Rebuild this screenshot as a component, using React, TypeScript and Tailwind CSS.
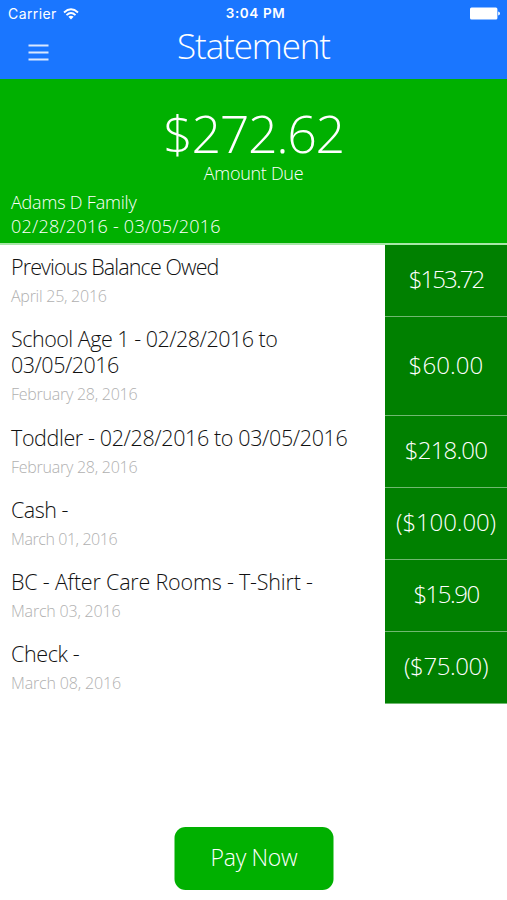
type Item = { title: string[]; date: string; amount: string; track: string; dateTrack: string; amountTrack: string };

const items: Item[] = [
  { title: ["Previous Balance Owed"], date: "April 25, 2016", amount: "$153.72", track: "tracking-[-0.9px]", dateTrack: "tracking-[-0.25px]", amountTrack: "tracking-[-1.9px]" },
  { title: ["School Age 1 - 02/28/2016 to", "03/05/2016"], date: "February 28, 2016", amount: "$60.00", track: "tracking-[-0.5px]", dateTrack: "tracking-[-0.25px]", amountTrack: "tracking-[0.1px]" },
  { title: ["Toddler - 02/28/2016 to 03/05/2016"], date: "February 28, 2016", amount: "$218.00", track: "tracking-[-0.38px]", dateTrack: "tracking-[-0.25px]", amountTrack: "tracking-[-0.8px]" },
  { title: ["Cash -"], date: "March 01, 2016", amount: "($100.00)", track: "tracking-[-0.5px]", dateTrack: "tracking-[-0.42px]", amountTrack: "tracking-[-0.1px]" },
  { title: ["BC - After Care Rooms - T-Shirt -"], date: "March 03, 2016", amount: "$15.90", track: "tracking-[-0.2px]", dateTrack: "tracking-[-0.2px]", amountTrack: "tracking-[-1.5px]" },
  { title: ["Check -"], date: "March 08, 2016", amount: "($75.00)", track: "tracking-[-0.4px]", dateTrack: "tracking-[-0.15px]", amountTrack: "tracking-[-0.4px]" },
];

function StatusBar() {
  return (
    <div className="grid h-[27px] grid-cols-3 items-center pr-[7px] pl-2 font-['Inter','Liberation_Sans',sans-serif] text-[14px] leading-none font-normal">
      <div className="flex items-center gap-[6px]">
        <span className="tracking-[0.4px]">Carrier</span>
        <svg width="16" height="12" viewBox="0 0 16 12" fill="none" stroke="white" strokeWidth="1.9">
          <path d="M1 4.5Q8 -1.8 15 4.5" />
          <path d="M3.5 7.1Q8 3.1 12.5 7.1" />
          <path d="M5.4 8.8Q8 6.6 10.6 8.8L8 11.6Z" fill="white" stroke="none" />
        </svg>
      </div>
      <span className="pl-[3px] text-center text-[13.5px] font-semibold tracking-[0.6px] whitespace-nowrap">3:04 PM</span>
      <svg className="justify-self-end" width="30" height="13" viewBox="0 0 30 13" fill="white">
        <rect x="0" y="0.5" width="27.4" height="12" rx="1.5" />
        <path d="M28.2 4.5Q30 5 30 6.5T28.2 8.5Z" />
      </svg>
    </div>
  );
}

export default function App() {
  return (
    <div className="flex h-[900px] w-[507px] flex-col overflow-hidden bg-white font-['Open_Sans','Noto_Sans',sans-serif] font-[350]">
      <header className="h-[79px] bg-[#1a76ff] text-white">
        <StatusBar />
        <div className="grid grid-cols-[1fr_auto_1fr]">
          <svg className="mt-[17px] ml-[28px]" width="21" height="17" viewBox="0 0 21 17" stroke="#d9e8ff" strokeWidth="1.8">
            <path d="M0.5 1.5H20.5M0.5 8.5H20.5M0.5 15.5H20.5" />
          </svg>
          <h1 className="text-[35px] leading-[38px] font-light tracking-[-1.1px]">Statement</h1>
        </div>
      </header>
      <section className="flex h-[166px] flex-col border-b-2 border-[#a8e6a8] bg-[#00b000] text-white">
        <div className="mt-[28px] text-center text-[52px] leading-[52px] font-light tracking-[-1.4px]">$272.62</div>
        <div className="mt-[2px] text-center text-[18px] leading-6 tracking-[-0.3px]">Amount Due</div>
        <div className="mt-[5px] pl-[11px] text-[18px] leading-6">
          <p className="tracking-[-0.2px]">Adams D Family</p>
          <p className="tracking-[0.25px]">02/28/2016 - 03/05/2016</p>
        </div>
      </section>
      <ul>
        {items.map((item, i) => (
          <li key={i} className={item.title.length > 1 ? "flex h-[99px]" : "flex h-[72px]"}>
            <div className="flex-1 pt-[9px] pl-[11px]">
              <div className={`text-[21.5px] leading-[26px] whitespace-nowrap text-[#111] ${item.track}`}>
                {item.title.map((line) => (
                  <p key={line}>{line}</p>
                ))}
              </div>
              <p className={`mt-[4px] text-[16px] leading-6 text-[#b0b0b0] ${item.dateTrack}`}>{item.date}</p>
            </div>
            <div className={`flex w-[122px] items-center justify-center border-b border-[#70b870] bg-[#008000] pb-[3px] text-[24px] leading-none font-light text-white ${item.amountTrack}`}>
              {item.amount}
            </div>
          </li>
        ))}
      </ul>
      <button className="mt-auto mb-[10px] h-[63px] w-[159px] translate-x-[174.5px] rounded-[11px] bg-[#00b000] pb-[3px] text-[23px] font-light tracking-[-0.3px] text-white">
        Pay Now
      </button>
    </div>
  );
}
